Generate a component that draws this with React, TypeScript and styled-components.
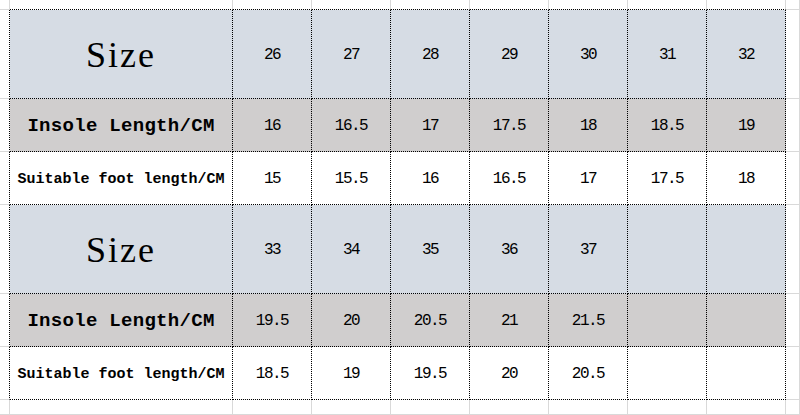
import React from "react";
import styled, { createGlobalStyle } from "styled-components";

const GlobalStyle = createGlobalStyle`
  html, body {
    margin: 0;
    padding: 0;
    background: #ffffff;
  }
`;

const GRID = "#d9d9d9";
const DOT = "1px dotted #000";

const Sheet = styled.div`
  width: 800px;
  height: 415px;
  overflow: hidden;
  display: grid;
  grid-template-columns: 10px 223px repeat(7, 79px) 1fr;
  grid-template-rows: 10px 89px 53px 53px 89px 53px 53px 1fr;
  background: #ffffff;
`;

type Fill = "size" | "insole" | "plain";

const fills: Record<Fill, string> = {
  size: "#d6dce4",
  insole: "#d0cece",
  plain: "#ffffff",
};

const Cell = styled.div<{ $fill?: Fill; $dotR?: boolean; $dotB?: boolean }>`
  box-sizing: border-box;
  display: flex;
  align-items: center;
  justify-content: center;
  padding-top: 2px;
  background: ${(p) => fills[p.$fill || "plain"]};
  border-right: ${(p) => (p.$dotR ? DOT : `1px solid ${GRID}`)};
  border-bottom: ${(p) => (p.$dotB ? DOT : `1px solid ${GRID}`)};
  color: #000;
  white-space: nowrap;
  overflow: hidden;
`;

const SizeLabel = styled.span`
  font-family: "Liberation Serif", "Times New Roman", serif;
  font-size: 36px;
  letter-spacing: 2px;
`;

const InsoleLabel = styled.span`
  font-family: "Liberation Mono", "DejaVu Sans Mono", monospace;
  font-weight: 700;
  font-size: 19px;
  letter-spacing: 0.3px;
`;

const FootLabel = styled.span`
  font-family: "Liberation Mono", "DejaVu Sans Mono", monospace;
  font-weight: 700;
  font-size: 15px;
`;

const Value = styled.span`
  font-family: "Liberation Mono", "DejaVu Sans Mono", monospace;
  font-size: 16px;
  letter-spacing: -1.5px;
`;

type Block = { sizes: string[]; insole: string[]; foot: string[] };

const blocks: Block[] = [
  {
    sizes: ["26", "27", "28", "29", "30", "31", "32"],
    insole: ["16", "16.5", "17", "17.5", "18", "18.5", "19"],
    foot: ["15", "15.5", "16", "16.5", "17", "17.5", "18"],
  },
  {
    sizes: ["33", "34", "35", "36", "37", "", ""],
    insole: ["19.5", "20", "20.5", "21", "21.5", "", ""],
    foot: ["18.5", "19", "19.5", "20", "20.5", "", ""],
  },
];

const labels: Record<Fill, React.ReactNode> = {
  size: <SizeLabel>Size</SizeLabel>,
  insole: <InsoleLabel>Insole Length/CM</InsoleLabel>,
  plain: <FootLabel>Suitable foot length/CM</FootLabel>,
};

const TableRow = ({ fill, values, r }: { fill: Fill; values: string[]; r: string }) => (
  <>
    <Cell $dotR />
    <Cell $fill={fill} $dotR $dotB>
      {labels[fill]}
    </Cell>
    {values.map((v, i) => (
      <Cell key={r + i} $fill={fill} $dotR $dotB>
        <Value>{v}</Value>
      </Cell>
    ))}
    <Cell />
  </>
);

const App = () => {
  const edge = Array.from({ length: 8 });
  return (
    <>
      <GlobalStyle />
      <Sheet>
        <Cell />
        {edge.map((_, i) => (
          <Cell key={"top" + i} $dotB />
        ))}
        <Cell />
        {blocks.map((b, bi) => (
          <React.Fragment key={bi}>
            <TableRow fill="size" values={b.sizes} r={`s${bi}`} />
            <TableRow fill="insole" values={b.insole} r={`i${bi}`} />
            <TableRow fill="plain" values={b.foot} r={`f${bi}`} />
          </React.Fragment>
        ))}
        <Cell />
        {edge.map((_, i) => (
          <Cell key={"bot" + i} />
        ))}
        <Cell />
      </Sheet>
    </>
  );
};

export default App;
